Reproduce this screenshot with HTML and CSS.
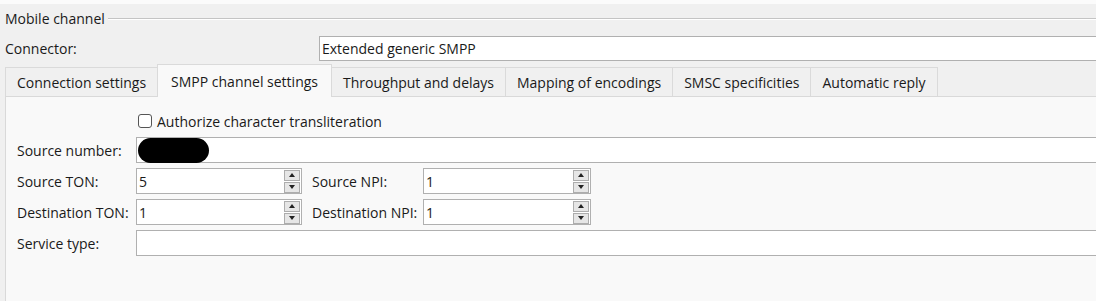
FILE: index.html
```html
<!DOCTYPE html>
<html lang="en">
<head>
  <meta charset="UTF-8" />
  <title>Mobile channel</title>
  <link rel="stylesheet" href="styles.css">
</head>
<body>
  <div class="top-strip"></div>
  <div class="group">
    <div class="legend">
      <span>Mobile channel</span>
      <span class="legend-line"></span>
    </div>

    <div class="connector-row">
      <label class="connector-label">Connector:</label>
      <div class="field wide">Extended generic SMPP</div>
    </div>

    <div class="tabs">
      <div class="tab">Connection settings</div>
      <div class="tab active">SMPP channel settings</div>
      <div class="tab">Throughput and delays</div>
      <div class="tab">Mapping of encodings</div>
      <div class="tab">SMSC specificities</div>
      <div class="tab">Automatic reply</div>
    </div>

    <div class="panel">
      <div class="check-row">
        <span class="checkbox"></span>
        <span>Authorize character transliteration</span>
      </div>

      <div class="form-grid">
        <label>Source number:</label>
        <div class="field span-all"><span class="redacted"></span></div>

        <label>Source TON:</label>
        <div class="field spin">
          <span class="value">5</span>
          <span class="spinner"><span class="up"></span><span class="down"></span></span>
        </div>
        <label class="second">Source NPI:</label>
        <div class="field spin">
          <span class="value">1</span>
          <span class="spinner"><span class="up"></span><span class="down"></span></span>
        </div>
        <div></div>

        <label>Destination TON:</label>
        <div class="field spin">
          <span class="value">1</span>
          <span class="spinner"><span class="up"></span><span class="down"></span></span>
        </div>
        <label class="second">Destination NPI:</label>
        <div class="field spin">
          <span class="value">1</span>
          <span class="spinner"><span class="up"></span><span class="down"></span></span>
        </div>
        <div></div>

        <label>Service type:</label>
        <div class="field span-all"></div>
      </div>
    </div>
  </div>
</body>
</html>
```

FILE: styles.css
```css
body {
  margin: 0;
  background-color: #f0f0f0;
  font-family: 'Open Sans', 'Noto Sans', sans-serif;
  font-size: 14px;
  color: #1a1a1a;
  overflow: hidden;
  height: 301px;
}
.top-strip {
  height: 4px;
  background-color: #fbfbfb;
}
.group {
  padding-left: 5px;
  margin-right: -6px;
}
.legend {
  display: flex;
  align-items: center;
  height: 28px;
}
.legend-line {
  flex: 1;
  margin-left: 3px;
  margin-top: 1px;
  border-top: 1px solid #c4c4c4;
  border-bottom: 1px solid #fff;
}
.connector-row {
  display: flex;
  align-items: center;
  margin-top: 4px;
}
.connector-label {
  width: 314px;
}
.field {
  box-sizing: border-box;
  height: 25px;
  background-color: #fff;
  border: 1px solid #b0b0b0;
  display: flex;
  align-items: center;
  padding-left: 2px;
}
.wide {
  flex: 1;
}
.tabs {
  display: flex;
  align-items: flex-end;
  height: 35px;
}
.tab {
  box-sizing: border-box;
  height: 29px;
  padding: 0 11px;
  display: flex;
  align-items: center;
  background-color: #f0f0f0;
  border: 1px solid #dadada;
  border-bottom: none;
  margin-right: -1px;
}
.tab.active {
  background-color: #f9f9f9;
  padding: 0 13px;
  position: relative;
  z-index: 1;
  margin-bottom: -1px;
  height: 33px;
}
.panel {
  background-color: #f9f9f9;
  border: 1px solid #d9d9d9;
  border-right: none;
  height: 190px;
  padding: 15px 0 0 11px;
}
.check-row {
  display: flex;
  align-items: center;
  margin-left: 121px;
  height: 18px;
  gap: 5px;
}
.checkbox {
  box-sizing: border-box;
  width: 14px;
  height: 14px;
  border: 1px solid #555;
  border-radius: 3px;
  background-color: #fff;
}
.form-grid {
  display: grid;
  grid-template-columns: 119px 166px 121px 168px 1fr;
  row-gap: 5px;
  margin-top: 7px;
  align-items: center;
}
.form-grid .field {
  height: 26px;
}
.span-all {
  grid-column: 2 / -1;
}
.second {
  padding-left: 10px;
}
.spin {
  justify-content: space-between;
  padding-right: 1px;
}
.redacted {
  display: block;
  width: 71px;
  height: 25px;
  margin-left: -1px;
  background-color: #000;
  border-radius: 13px;
}
.spinner {
  display: flex;
  flex-direction: column;
  gap: 1px;
  width: 16px;
}
.spinner span {
  box-sizing: border-box;
  height: 11px;
  background-color: #e6e6e6;
  border: 1px solid #adadad;
  display: flex;
  align-items: center;
  justify-content: center;
}
.spinner .up::after {
  content: "";
  border-left: 3px solid transparent;
  border-right: 3px solid transparent;
  border-bottom: 4px solid #222;
}
.spinner .down::after {
  content: "";
  border-left: 3px solid transparent;
  border-right: 3px solid transparent;
  border-top: 4px solid #222;
}
```
